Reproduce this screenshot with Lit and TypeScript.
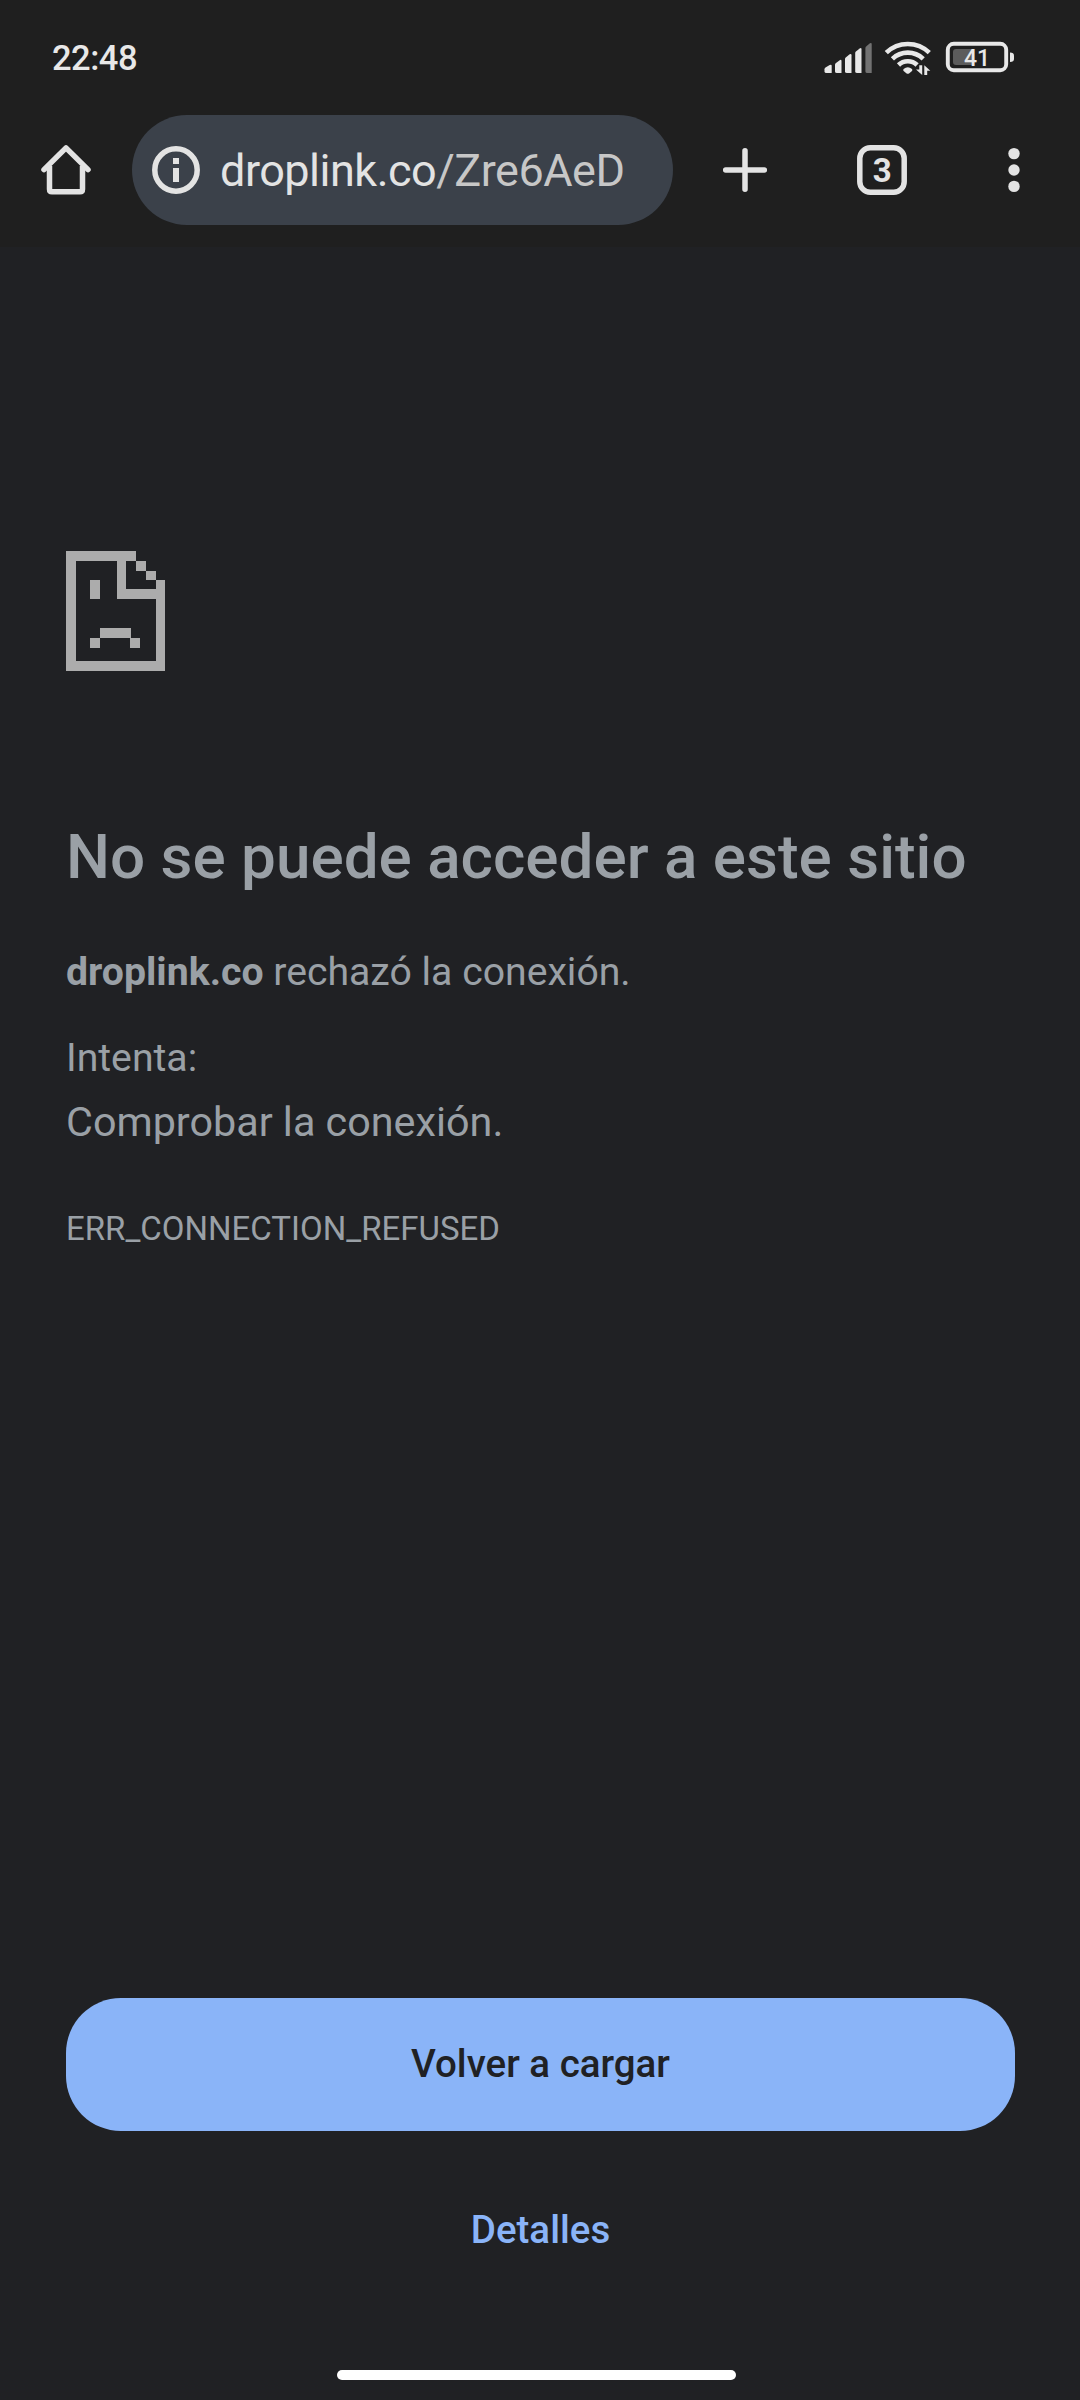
import { LitElement, html, css } from "lit";
import { customElement } from "lit/decorators.js";

const FONT = css`Roboto, "Noto Sans", sans-serif`;

@customElement("status-bar")
class StatusBar extends LitElement {
  static styles = css`
    :host { display: flex; justify-content: space-between; height: 115px; padding: 0 66px 0 52px; box-sizing: border-box; font-family: ${FONT}; color: #e8e8e8; }
    .time { font-size: 34.500px; letter-spacing: -0.500px; font-weight: 500; line-height: 40px; margin-top: 38px; }
    .icons { display: block; margin-top: 38px; width: 191px; height: 40px; }
    .level { font: 500 23px ${FONT}; }
  `;
  render() {
    return html`
      <span class="time">22:48</span>
      <svg class="icons" viewBox="823 38 191 40" fill="#e8e8e8">
        <path d="M824.500 71.500v-2.200q0-1.200 1-1.800l4.200-2.500q2-1 2 1v7h-5.200q-2 0-2-1.500z" />
        <path d="M835 71.500v-6.800q0-1 1-1.600l3.700-2.900q1.800-1.200 1.800 1v11.800h-4.500q-2 0-2-1.500z" />
        <path d="M845 71.500v-12.500q0-1 1-1.800l3.700-2.900q1.800-1.200 1.800 1v17.700h-4.500q-2 0-2-1.500z" />
        <path d="M855.200 71.500v-18.500q0-1 1-1.800l3.500-2.700q1.800-1.200 1.800 1v23.500h-4.300q-2 0-2-1.500z" />
        <path fill="#727272" d="M865.400 71.500v-23.500q0-1 1-1.800l3.500-2.900q1.800-1.200 1.800 1v28.700h-4.300q-2 0-2-1.500z" />
        <g fill="none" stroke="#e8e8e8" stroke-width="4.600">
          <path d="M886.300 52.600a31 31 0 0 1 43 0" />
          <path d="M892.400 58.800a22.300 22.300 0 0 1 30.800 0" />
          <path d="M898.500 65a13.300 13.300 0 0 1 18.600 0" />
        </g>
        <path d="M903.600 69q4.200-3.600 8.400 0 .8 1 0 2l-3 2.400q-1.200.9-2.400 0l-3-2.400q-.8-1 0-2z" />
        <path d="M919.300 65.300h2.900v9.700l-6.200-5.500h3.300zM924.300 75v-9.700l6 5.500h-3.100v4.200z" />
        <rect x="947.800" y="43.800" width="58.400" height="26.400" rx="6" fill="none" stroke="#e8e8e8" stroke-width="3.900" />
        <path fill="#5c5c5c" d="M956 49h17v16h-17q-3 0-3-3v-10q0-3 3-3z" />
        <path d="M1010 52.500q4 0 4 3v3.500q0 3-4 3z" />
        <text class="level" x="964" y="65.800">41</text>
      </svg>
    `;
  }
}

@customElement("browser-toolbar")
class BrowserToolbar extends LitElement {
  static styles = css`
    :host { display: flex; height: 132px; align-items: flex-start; font-family: ${FONT}; }
    .icon { display: block; height: 110px; flex: none; }
    .home { width: 132px; }
    .plus { width: 144px; }
    .tabs { width: 128px; }
    .menu { width: 135px; }
    .omnibox { box-sizing: border-box; width: 541px; height: 110px; border-radius: 55px; background: #3b414a; display: flex; align-items: center; padding-left: 19px; flex: none; }
    .info { display: block; width: 50px; height: 50px; }
    .url { margin-left: 19px; font-size: 45px; letter-spacing: -0.500px; line-height: 110px; padding-top: 2px; color: #c7c7c7; white-space: nowrap; }
    .host { color: #e3e3e3; }
    .count { font: 700 33px ${FONT}; }
  `;
  render() {
    return html`
      <svg class="icon home" viewBox="0 115 132 110" fill="none" stroke="#e3e3e3" stroke-width="5.500" stroke-linejoin="round" stroke-linecap="round">
        <path d="M44 169.600 66 147.900 88 169.600" />
        <path d="M49.500 166v23.300q0 2.500 2.500 2.500h28q2.500 0 2.500-2.500V166" stroke-linecap="butt" />
      </svg>
      <div class="omnibox">
        <svg class="info" viewBox="151 145 50 50" fill="#e3e3e3">
          <circle cx="176" cy="170" r="21.200" fill="none" stroke="#e3e3e3" stroke-width="5.500" />
          <path d="M173 158h6v6h-6zM173 168h6v14h-6z" />
        </svg>
        <span class="url"><span class="host">droplink.co</span>/Zre6AeD</span>
      </div>
      <svg class="icon plus" viewBox="673 115 144 110" stroke="#e3e3e3" stroke-width="5.500" stroke-linecap="round">
        <path d="M745 150.700v38.600M725.700 170h38.600" />
      </svg>
      <svg class="icon tabs" viewBox="817 115 128 110">
        <rect x="859.800" y="147.800" width="44.400" height="44.400" rx="10.500" fill="none" stroke="#e3e3e3" stroke-width="5.500" />
        <text class="count" x="882.200" y="182" text-anchor="middle" fill="#e3e3e3">3</text>
      </svg>
      <svg class="icon menu" viewBox="945 115 135 110" fill="#e3e3e3">
        <circle cx="1014" cy="153.600" r="5.700" /><circle cx="1014" cy="170" r="5.700" /><circle cx="1014" cy="186.400" r="5.700" />
      </svg>
    `;
  }
}

@customElement("error-page")
class ErrorPage extends LitElement {
  static styles = css`
    :host { display: flex; flex-direction: column; flex: 1; box-sizing: border-box; padding: 304px 65px 20px 66px; background: #202124; color: #9aa0a6; font-family: ${FONT}; white-space: nowrap; }
    .sad { display: block; width: 99px; height: 120px; flex: none; }
    h1 { margin: 148px 0 0; font-size: 62px; line-height: 76px; font-weight: 500; }
    p { margin: 0; }
    .summary { margin-top: 48px; font-size: 39.200px; line-height: 58px; }
    .try { margin-top: 28px; font-size: 39.200px; line-height: 58px; }
    .tip { margin-top: 5px; font-size: 41.300px; line-height: 60px; }
    .code { margin-top: 53px; font-size: 33px; line-height: 48px; }
    .actions { display: flex; flex-direction: column; align-items: center; margin-top: auto; }
    button { font: 500 38.500px/46px ${FONT}; border: 0; padding: 0 0 2px; }
    .reload { width: 100%; height: 133px; border-radius: 55px; background: #8ab4f8; color: #202124; }
    .details { margin-top: 33px; height: 133px; background: none; color: #8ab4f8; }
    .gesture { width: 399px; height: 10px; border-radius: 5px; background: #fff; margin: 73px 8px 0 0; }
  `;
  render() {
    return html`
      <svg class="sad" viewBox="0 0 99 120" fill="#acacac" shape-rendering="crispEdges">
        <path d="M0 0H70V10H60V38H90V29H99V120H0zM10 10V110H90V48H51V10z" fill-rule="evenodd" />
        <path d="M70 10h10v10h-10zM80 20h10v9h-10zM24 29h10v19h-10zM34 77h31v10h-31zM24 87h10v10h-10zM64 87h10v10h-10z" />
      </svg>
      <h1>No se puede acceder a este sitio</h1>
      <p class="summary"><strong>droplink.co</strong> rechazó la conexión.</p>
      <p class="try">Intenta:</p>
      <p class="tip">Comprobar la conexión.</p>
      <p class="code">ERR_CONNECTION_REFUSED</p>
      <div class="actions">
        <button class="reload">Volver a cargar</button>
        <button class="details">Detalles</button>
        <div class="gesture"></div>
      </div>
    `;
  }
}

@customElement("app-root")
class AppRoot extends LitElement {
  static styles = css`
    :host { display: flex; flex-direction: column; width: 1080px; height: 2400px; overflow: hidden; background: #1f1f1f; }
  `;
  render() {
    return html`
      <status-bar></status-bar>
      <browser-toolbar></browser-toolbar>
      <error-page></error-page>
    `;
  }
}
